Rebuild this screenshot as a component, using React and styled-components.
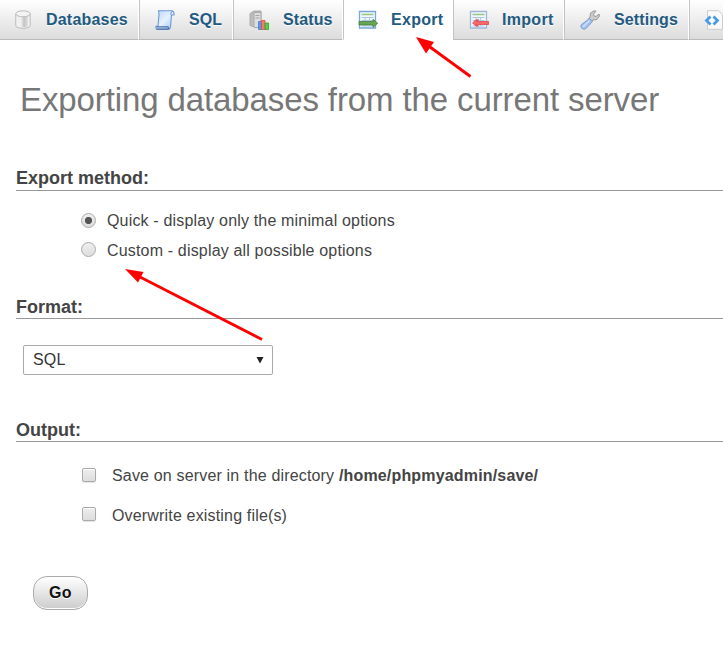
import React from "react";
import styled, { createGlobalStyle, css } from "styled-components";

const Global = createGlobalStyle`
  *{box-sizing:border-box}
  html,body{margin:0;background:#fff;overflow:hidden}
  body{font-family:"Liberation Sans",Arial,sans-serif;color:#444;font-size:16px}
`;

const Page = styled.div`
  position: relative;
  width: 723px;
  height: 650px;
  overflow: hidden;
`;

const TabBar = styled.nav`
  display: flex;
  height: 40px;
  overflow: hidden;
`;

const Tab = styled.a`
  display: flex;
  flex: none;
  align-items: center;
  width: ${(p) => p.$width}px;
  padding-left: ${(p) => p.$pad}px;
  border-left: 1px solid #c4c4c4;
  border-right: 1px solid #fff;
  border-bottom: 1px solid ${(p) => (p.$active ? "#fff" : "#bbb")};
  background: ${(p) => (p.$active ? "#fff" : "linear-gradient(#fff, #dcdcdc)")};
  color: #235a81;
  font-weight: bold;
  font-size: 16px;
  text-shadow: 0 1px 0 #fff;
  white-space: nowrap;
  &:first-child {
    border-left: 0;
  }
`;

const TabLabel = styled.span`
  display: block;
  margin-left: ${(p) => p.$gap}px;
  letter-spacing: ${(p) => p.$ls}px;
  line-height: 20px;
`;

const TabIcon = styled.svg`
  display: block;
  flex: none;
  width: 20px;
  height: 20px;
`;

const Title = styled.h2`
  margin: 38px 0 0 20px;
  height: 44px;
  line-height: 44px;
  font-size: 33px;
  letter-spacing: -0.11px;
  font-weight: normal;
  color: #777;
  white-space: nowrap;
`;

const Section = styled.section`
  margin: ${(p) => p.$top}px 0 0 16px;
`;

const Heading = styled.h3`
  margin: 0;
  height: ${(p) => p.$height}px;
  line-height: 24px;
  font-size: 18px;
  color: #444;
  border-bottom: 1px solid #999;
`;

const Option = styled.label`
  display: flex;
  align-items: flex-start;
  height: 20px;
  margin-top: ${(p) => p.$top}px;
  margin-left: 65px;
  font-size: 16px;
  line-height: 20px;
  white-space: pre;
`;

const OptionText = styled.span`
  letter-spacing: 0.17px;
`;

const controlFace = css`
  appearance: none;
  flex: none;
  border: 1px solid #aaa;
  background: linear-gradient(#eee, #ddd);
`;

const Radio = styled.input`
  ${controlFace}
  width: 15px;
  height: 15px;
  margin: ${(p) => p.$drop}px 11px 0 0;
  border-radius: 50%;
  &:checked {
    background: radial-gradient(circle, #555 0 3.2px, transparent 4px), linear-gradient(#eee, #ddd);
  }
`;

const Checkbox = styled.input`
  ${controlFace}
  width: 14px;
  height: 14px;
  margin: ${(p) => p.$drop}px 16px 0 1px;
  border-radius: 2px;
  box-shadow: inset 0 1px 1px #fff, 0 1px 1px #e4e4e4;
`;

const Select = styled.button`
  display: flex;
  align-items: center;
  justify-content: space-between;
  width: 250px;
  height: 30px;
  margin: 26px 0 0 7px;
  padding: 0 8px 0 9px;
  border: 1px solid #aaa;
  border-radius: 2px;
  background: #fff;
  color: #333;
  font: 16px "Liberation Sans", Arial, sans-serif;
  letter-spacing: 0.2px;
`;

const Caret = styled.svg`
  width: 8px;
  height: 8px;
`;

const GoButton = styled.button`
  display: block;
  width: 55px;
  height: 34px;
  margin: 50px 0 0 33px;
  padding: 0;
  border: 1px solid #aaa;
  border-radius: 14px;
  background: linear-gradient(#fff, #ccc);
  box-shadow: inset 0 -1px 0 #fff;
  color: #111;
  font: bold 16px "Liberation Sans", Arial, sans-serif;
  letter-spacing: 0.3px;
  text-shadow: 0 1px 0 #fff;
`;

const Arrows = styled.svg`
  position: absolute;
  left: 0;
  top: 0;
  pointer-events: none;
`;

const DatabaseIcon = () => (
  <TabIcon viewBox="0 0 20 20">
    <defs>
      <linearGradient id="cyl">
        <stop offset="0" stopColor="#eee" />
        <stop offset=".3" stopColor="#f0f0f0" />
        <stop offset=".6" stopColor="#c4c4c4" />
        <stop offset="1" stopColor="#e2e2e2" />
      </linearGradient>
    </defs>
    <path d="M2.800 4v11.500c0 3.700 14.400 3.700 14.400 0V4" fill="#f4f4f4" stroke="#b8b8b8" />
    <path d="M4.800 5v10.500c0 2 10.400 2 10.400 0V5" fill="url(#cyl)" />
    <ellipse cx="10" cy="3.800" rx="7.200" ry="3" fill="#f3f3f3" stroke="#bbb" />
  </TabIcon>
);

const ScrollIcon = () => (
  <TabIcon viewBox="0 0 20 20">
    <defs>
      <linearGradient id="paper" x2="1" y2="1">
        <stop stopColor="#b8d5f8" />
        <stop offset=".5" stopColor="#e5f1ff" />
        <stop offset="1" stopColor="#9dc3f2" />
      </linearGradient>
    </defs>
    <path d="M3 .7h14q2.400.5 2 4.300h-2.500l-1 12q-.3 2.300-2 2.300H2q-1.500-.5-1-3h2L4 4Q4 1 3 .7Z" fill="url(#paper)" stroke="#6b9ad6" strokeWidth="1.100" />
    <path d="M16 5V3q.3-2 2-1.500" fill="none" stroke="#6b9ad6" />
    <path d="M1.500 16.800H13q.2 2 1.500 2M1.500 19.200h12" fill="none" stroke="#4a6fa5" strokeWidth="1.200" />
  </TabIcon>
);

const StatusIcon = () => (
  <TabIcon viewBox="0 0 20 20">
    <path d="M1 3.500 5 1h7v16H6l-5-1.500Z" fill="#bdbdbd" stroke="#aaa" />
    <path d="M5 2.500h7v15H5Z" fill="#dedede" stroke="#aaa" />
    <path d="M6.500 5.500h4M6.500 8h4" stroke="#a4a4a4" />
    <path d="M9.500 11.500h3v8h-3Z" fill="#4b9cf5" stroke="#3b80d0" strokeWidth=".8" />
    <path d="M12.500 10.500h3.500v9h-3.500Z" fill="#f77b68" stroke="#e24b32" strokeWidth=".8" />
    <path d="M16.200 13h3.300v6.500h-3.300Z" fill="#54cf4e" stroke="#29a72b" strokeWidth=".8" />
  </TabIcon>
);

const SheetIcon = ({ incoming }) => (
  <TabIcon viewBox="0 0 20 20">
    <path d="M1.500 1.500h16v16.500h-16Z" fill="#f3f8ff" stroke={incoming ? "#9fb5d6" : "#78a6da"} strokeWidth="1.300" />
    <path d="M3.500 4.500h12" stroke="#94c581" strokeWidth="1.500" />
    <path d="M3.500 7.500h12M3.500 10.500h12M3.500 16h12M7 7v9M11.500 7v9" stroke="#adc6e8" />
    {incoming ? (
      <path d="m3.500 13 4-3.500v2H9v-2.500l0 2.500h10.500v3H9v2L7.500 14.500v2Z" fill="#f46868" stroke="#df3b43" strokeWidth=".7" />
    ) : (
      <path d="M1 11.500h14V9.300l4.700 4-4.700 4V15H1Z" fill="#68a657" stroke="#39742e" strokeWidth=".7" />
    )}
  </TabIcon>
);

const WrenchIcon = () => (
  <TabIcon viewBox="0 0 20 20">
    <path d="m10 7 .5-4L14 .8l2 .4-2.500 2.800.5 2 2 .5 3-2.500.5 2-2.500 3.500-4 .5-2 1.500-2.500-2.500Z" fill="#ccc" stroke="#999" />
    <path d="m9.500 8.500 3 3-6.500 7q-2 1.500-4 0-2.200-2-.5-4Z" fill="#a3c1f0" stroke="#7d9fd4" />
    <path d="m9.500 10.500-6.500 6.500" stroke="#d0e1ff" strokeWidth="1.500" />
  </TabIcon>
);

const CodeIcon = () => (
  <TabIcon viewBox="0 0 20 20">
    <path d="M3.500.7h11l4 4v14.600h-15Z" fill="#fafafa" stroke="#ccc" />
    <path d="M6.500 6.500 2.500 10.500l4 4M9.500 6.500l4 4-4 4" fill="none" stroke="#4b9aea" strokeWidth="2.800" />
  </TabIcon>
);

const tabs = [
  { label: "Databases", icon: <DatabaseIcon />, width: 139, pad: 13, gap: 13, ls: 0.2 },
  { label: "SQL", icon: <ScrollIcon />, width: 94, pad: 15, gap: 14, ls: 0.1 },
  { label: "Status", icon: <StatusIcon />, width: 110, pad: 15, gap: 14, ls: 0.1 },
  { label: "Export", icon: <SheetIcon />, width: 110, pad: 14, gap: 13, ls: 0.3, active: true },
  { label: "Import", icon: <SheetIcon incoming />, width: 111, pad: 15, gap: 13, ls: 0.3 },
  { label: "Settings", icon: <WrenchIcon />, width: 125, pad: 15, gap: 14, ls: 0.1 },
  { label: "", icon: <CodeIcon />, width: 100, pad: 14, gap: 14, ls: 0 },
];

export default function App() {
  return (
    <Page>
      <Global />
      <TabBar>
        {tabs.map((t) => (
          <Tab key={t.label} $width={t.width} $pad={t.pad} $active={t.active}>
            {t.icon}
            <TabLabel $gap={t.gap} $ls={t.ls}>{t.label}</TabLabel>
          </Tab>
        ))}
      </TabBar>
      <Title>Exporting databases from the current server</Title>
      <Section $top={44}>
        <Heading $height={25}>Export method:</Heading>
        <Option $top={20}>
          <Radio type="radio" name="method" $drop={2} defaultChecked />
          <OptionText>Quick - display only the minimal options</OptionText>
        </Option>
        <Option $top={10}>
          <Radio type="radio" name="method" $drop={1} />
          <OptionText>Custom - display all possible options</OptionText>
        </Option>
      </Section>
      <Section $top={34}>
        <Heading $height={24}>Format:</Heading>
        <Select type="button">
          SQL
          <Caret viewBox="0 0 8 8"><path d="M.5 1h7L4 7.500Z" fill="#222" /></Caret>
        </Select>
      </Section>
      <Section $top={43}>
        <Heading $height={24}>Output:</Heading>
        <Option $top={24}>
          <Checkbox type="checkbox" $drop={2} />
          <OptionText>Save on server in the directory <b>/home/phpmyadmin/save/</b></OptionText>
        </Option>
        <Option $top={20}>
          <Checkbox type="checkbox" $drop={1} />
          <OptionText>Overwrite existing file(s)</OptionText>
        </Option>
      </Section>
      <GoButton type="button">Go</GoButton>
      <Arrows width="723" height="650" fill="#f00" stroke="#f00">
        <path d="M470.500 76.500 430 47" strokeWidth="2.800" />
        <path d="m416 37 18 5-8 11.500Z" stroke="none" />
        <path d="M262 339.500 140 277" strokeWidth="2.800" />
        <path d="m125 269 18.500 3-5.500 10.500Z" stroke="none" />
      </Arrows>
    </Page>
  );
}
